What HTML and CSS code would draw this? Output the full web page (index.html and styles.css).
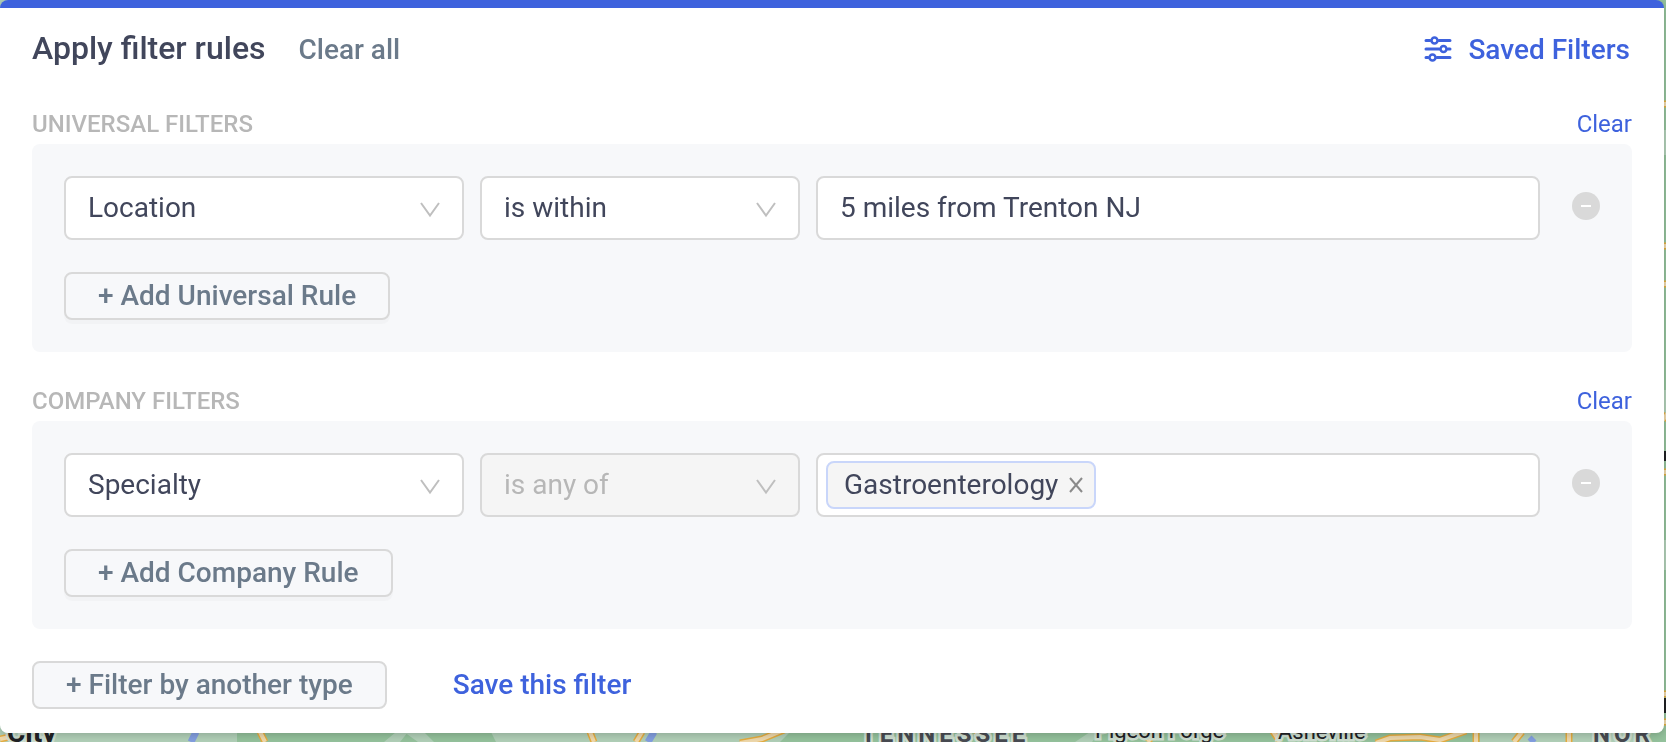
FILE: index.html
```html
<!DOCTYPE html>
<html lang="en">
<head>
  <meta charset="UTF-8" />
  <meta name="viewport" content="width=device-width, initial-scale=1" />
  <title>Filter rules</title>
  <link rel="stylesheet" href="styles.css">
</head>
<body>
  <!-- map behind the filter panel -->
  <svg class="map" viewBox="0 0 1666 742" preserveAspectRatio="xMaxYMax slice" aria-hidden="true">
    <rect width="1666" height="742" fill="#94c29c"/>
    <path class="land" d="M0 0H14V14H0ZM0 700H237V742H0ZM486 722L496 742H780L800 722ZM1480 700H1640V742H1480ZM1664 130H1666V155H1664ZM1664 540H1666V570H1664ZM1664 390H1666V420H1664Z"/>
    <path class="land" d="M384 742L396 732H408L400 742ZM404 732H424L434 742H418ZM1075 742L1090 732H1100L1092 742Z"/>
    <path class="water" d="M191 742L196 732M648 742L654 732M1530 742L1534 738"/>
    <g class="road-edge">
      <path id="roads" d="M0 739L14 736M260 732L265 742M590 732L594 742M636 742L642 732M740 743L762 739L784 730M976 732L984 742M1148 742L1154 732M1272 730L1280 742M1376 743L1390 738L1420 737L1440 740L1466 731M1476 732V742M1514 742L1522 732M1569 732V742M1663 104H1666M1663 246H1666M1663 284H1666M1663 420L1667 414M1663 472H1666M1663 694H1666M1663 722H1666"/>
    </g>
    <use href="#roads" class="road"/>
    <g class="label">
      <text x="7" y="742" class="city">City</text>
      <text x="861" y="742" class="state">TENNESSEE</text>
      <text x="1095" y="738">Pigeon Forge</text>
      <text x="1278" y="739">Asheville</text>
      <text x="1593" y="742" class="state">NOR</text>
    </g>
    <path fill="#202124" d="M1664 698H1666V713H1664ZM1664 451H1666V461H1664Z"/>
  </svg>

  <main class="filter-panel">
    <header class="panel-header">
      <h1>Apply filter rules</h1>
      <button type="button" class="text-btn muted">Clear all</button>
      <button type="button" class="text-btn saved">
        <svg width="28" height="28" viewBox="0 0 28 28" fill="none" stroke="currentColor" stroke-width="3" stroke-linecap="round" aria-hidden="true">
          <path d="M2 5.500H6M15 5.500H26M2 14H15M24 14H26M2 22.500H4M13 22.500H26"/>
          <g stroke-width="2.500">
            <circle cx="10.500" cy="5.500" r="3"/>
            <circle cx="19.500" cy="14" r="3"/>
            <circle cx="8.500" cy="22.500" r="3"/>
          </g>
        </svg>
        Saved Filters
      </button>
    </header>

    <section class="filter-group">
      <div class="group-head">
        <h2>UNIVERSAL FILTERS</h2>
        <button type="button" class="clear-btn">Clear</button>
      </div>
      <div class="group-body">
        <div class="rule">
          <div class="select-wrap field">
            <select aria-label="Universal filter field"><option>Location</option></select>
            <svg class="chevron" width="22" height="16" viewBox="0 0 22 16" aria-hidden="true"><path d="M2 1L11 13.500L20 1"/></svg>
          </div>
          <div class="select-wrap operator">
            <select aria-label="Universal filter condition"><option>is within</option></select>
            <svg class="chevron" width="22" height="16" viewBox="0 0 22 16" aria-hidden="true"><path d="M2 1L11 13.500L20 1"/></svg>
          </div>
          <input type="text" class="value" aria-label="Universal filter value" value="5 miles from Trenton NJ">
          <button type="button" class="remove-btn" aria-label="Remove rule">
            <svg width="28" height="28" viewBox="0 0 28 28" aria-hidden="true"><circle cx="14" cy="14" r="14"/><path d="M9 14H19"/></svg>
          </button>
        </div>
        <button type="button" class="add-btn raised">+ Add Universal Rule</button>
      </div>
    </section>

    <section class="filter-group">
      <div class="group-head">
        <h2>COMPANY FILTERS</h2>
        <button type="button" class="clear-btn">Clear</button>
      </div>
      <div class="group-body">
        <div class="rule">
          <div class="select-wrap field">
            <select aria-label="Company filter field"><option>Specialty</option></select>
            <svg class="chevron" width="22" height="16" viewBox="0 0 22 16" aria-hidden="true"><path d="M2 1L11 13.500L20 1"/></svg>
          </div>
          <div class="select-wrap operator">
            <select aria-label="Company filter condition" disabled><option>is any of</option></select>
            <svg class="chevron" width="22" height="16" viewBox="0 0 22 16" aria-hidden="true"><path d="M2 1L11 13.500L20 1"/></svg>
          </div>
          <div class="value tags">
            <span class="tag">Gastroenterology
              <button type="button" aria-label="Remove Gastroenterology">
                <svg width="16" height="16" viewBox="0 0 16 16" aria-hidden="true"><path d="M2 1L14 15M14 1L2 15"/></svg>
              </button>
            </span>
            <input type="text" class="tag-input" aria-label="Company filter value">
          </div>
          <button type="button" class="remove-btn" aria-label="Remove rule">
            <svg width="28" height="28" viewBox="0 0 28 28" aria-hidden="true"><circle cx="14" cy="14" r="14"/><path d="M9 14H19"/></svg>
          </button>
        </div>
        <button type="button" class="add-btn raised">+ Add Company Rule</button>
      </div>
    </section>

    <footer class="panel-footer">
      <button type="button" class="add-btn">+ Filter by another type</button>
      <button type="button" class="text-btn">Save this filter</button>
    </footer>
  </main>
</body>
</html>
```
FILE: styles.css
```css
* {
  box-sizing: border-box;
}
body {
  margin: 0;
  min-height: 100vh;
  font-family: Roboto, "Liberation Sans", sans-serif;
  font-size: 28px;
  color: #41465b;
}
button, input, select {
  font: inherit;
  color: inherit;
}
button {
  padding: 0;
  border: 0;
  background: none;
  cursor: pointer;
}

/* map */
.map {
  position: fixed;
  inset: 0;
  width: 100%;
  height: 100%;
}
.land {
  fill: #b1d0b8;
}
.water {
  fill: none;
  stroke: #839fe0;
  stroke-width: 7;
}
.road-edge, .road {
  fill: none;
  stroke: #e6ad3f;
  stroke-width: 7;
}
.road {
  stroke: #efd9ac;
  stroke-width: 4;
}
.label {
  fill: #202124;
  stroke: #cfe0d2;
  stroke-width: 5;
  paint-order: stroke;
  font-size: 22px;
}
.city {
  font-size: 28px;
  font-weight: 700;
}
.state {
  fill: #484b52;
  font-size: 24px;
  font-weight: 700;
  letter-spacing: 4px;
}

/* panel */
.filter-panel {
  position: relative;
  margin-right: 2px;
  padding: 23px 32px 24px;
  border-radius: 8px;
  background: linear-gradient(#3e62dd 8px, #fff 8px);
  box-shadow: 0 2px 8px rgba(0, 0, 0, 0.2);
}
.panel-header {
  display: flex;
  align-items: center;
  height: 52px;
}
h1 {
  margin: 0 33px 0 0;
  padding-bottom: 2px;
  font-size: 32px;
  font-weight: 500;
}
.text-btn {
  display: flex;
  align-items: center;
  gap: 16px;
  font-weight: 500;
  color: #3e62dd;
}
.muted {
  color: #6b7a8a;
}
.saved {
  margin-left: auto;
  padding-right: 2px;
}

.filter-group {
  margin-top: 32px;
}
.group-head {
  display: flex;
  align-items: flex-start;
  justify-content: space-between;
  height: 37px;
  font-size: 24px;
  line-height: 34px;
}
h2 {
  margin: 0;
  font-size: 24px;
  font-weight: 500;
  color: #b7b7b7;
}
.clear-btn {
  color: #3e62dd;
}
.group-body {
  padding: 32px;
  border-radius: 8px;
  background: #f7f8fa;
}

/* rule row */
.rule {
  display: flex;
  gap: 16px;
  margin-bottom: 32px;
}
.select-wrap {
  position: relative;
}
.field {
  flex: 0 1 400px;
}
.operator {
  flex: 0 1 320px;
}
select, .value {
  width: 100%;
  height: 64px;
  padding: 0 22px 2px;
  border: 2px solid #d9d9d9;
  border-radius: 8px;
  background: #fff;
}
select {
  appearance: none;
}
select:disabled {
  background: #f5f5f5;
  color: #b7b7b7;
  opacity: 1;
}
.chevron {
  position: absolute;
  right: 23px;
  top: 26px;
  fill: none;
  stroke: #bfbfbf;
  stroke-width: 2;
  pointer-events: none;
}
.value {
  flex: 1;
  min-width: 0;
}
.tags {
  display: flex;
  align-items: center;
  padding: 0 8px;
}
.tag {
  display: flex;
  align-items: center;
  gap: 10px;
  height: 48px;
  padding: 0 10px 2px 16px;
  border: 2px solid #c9d6fa;
  border-radius: 8px;
  background: #f5f5f5;
}
.tag button {
  display: flex;
  padding-top: 2px;
}
.tag path {
  fill: none;
  stroke: #8a8a8a;
  stroke-width: 2;
}
.tag-input {
  flex: 1;
  min-width: 0;
  border: 0;
  outline: 0;
  background: none;
}
.remove-btn {
  display: flex;
  align-items: center;
  height: 60px;
  margin-left: 16px;
}
.remove-btn circle {
  fill: #d9d9d9;
}
.remove-btn path {
  stroke: #fff;
  stroke-width: 2;
}

.add-btn {
  height: 48px;
  padding: 0 32px 2px;
  border: 2px solid #d9d9d9;
  border-radius: 8px;
  background: #f7f8fa;
  font-weight: 500;
  color: #6b7a8a;
}
.raised {
  display: block;
  box-shadow: 0 4px 0 rgba(0, 0, 0, 0.02);
}
.panel-footer {
  display: flex;
  gap: 66px;
  margin-top: 32px;
}
.panel-footer .text-btn {
  padding-bottom: 2px;
}
```
